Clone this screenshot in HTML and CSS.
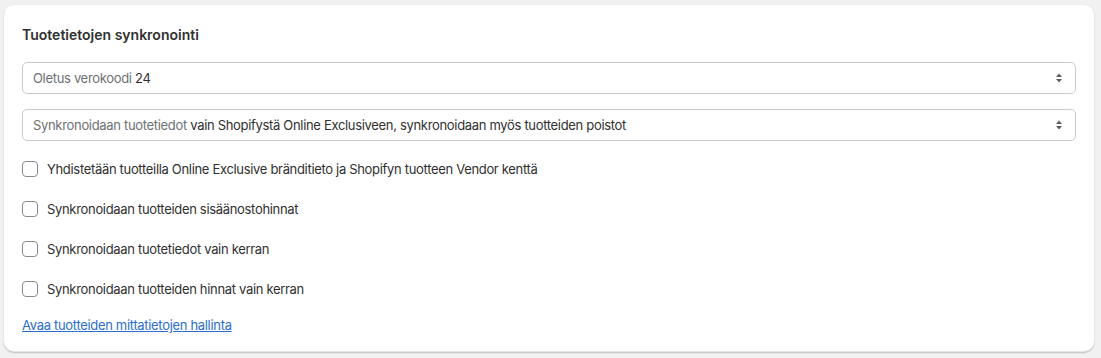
FILE: index.html
```html
<!DOCTYPE html>
<html lang="fi">
<head>
<meta charset="utf-8">
<title>Tuotetietojen synkronointi</title>
<link rel="stylesheet" href="styles.css">
</head>
<body>
<section class="card">
  <h2 class="card-title">Tuotetietojen synkronointi</h2>
  <div class="select select-first">
    <span class="select-text"><span class="select-label">Oletus verokoodi</span> 24</span>
    <svg class="select-arrows" width="10" height="12" viewBox="0 0 10 12"><path d="M5 1.5 L8 5 H2 Z M5 10.5 L8 7 H2 Z" fill="#5c5f62"/></svg>
  </div>
  <div class="select select-second">
    <span class="select-text"><span class="select-label">Synkronoidaan tuotetiedot</span> vain Shopifystä Online Exclusiveen, synkronoidaan myös tuotteiden poistot</span>
    <svg class="select-arrows" width="10" height="12" viewBox="0 0 10 12"><path d="M5 1.5 L8 5 H2 Z M5 10.5 L8 7 H2 Z" fill="#5c5f62"/></svg>
  </div>
  <div class="checks">
    <label class="check"><span class="box"></span><span>Yhdistetään tuotteilla Online Exclusive bränditieto ja Shopifyn tuotteen Vendor kenttä</span></label>
    <label class="check"><span class="box"></span><span>Synkronoidaan tuotteiden sisäänostohinnat</span></label>
    <label class="check"><span class="box"></span><span>Synkronoidaan tuotetiedot vain kerran</span></label>
    <label class="check"><span class="box"></span><span>Synkronoidaan tuotteiden hinnat vain kerran</span></label>
  </div>
  <a class="link" href="#">Avaa tuotteiden mittatietojen hallinta</a>
</section>
</body>
</html>
```
FILE: styles.css
```css
* { box-sizing: border-box; }
html, body { margin: 0; }
body {
  background: #f1f1f1;
  padding: 5px 7px 6px 4px;
  font-family: Inter, "Noto Sans", sans-serif;
  color: #303030;
  font-size: 13px;
  letter-spacing: -0.32px;
}
.card {
  width: 1090px;
  height: 347px;
  background: #ffffff;
  border-radius: 10px;
  box-shadow: 0 1px 0 0 rgba(26,26,26,0.07), 0 1px 2px rgba(0,0,0,0.15), inset 0 -1px 0 rgba(0,0,0,0.1);
  padding: 20px 18px 17px 18px;
  display: flex;
  flex-direction: column;
}
.card-title {
  margin: 0;
  font-size: 14px;
  line-height: 20px;
  font-weight: 600;
  color: #303030;
  letter-spacing: 0;
}
.select {
  height: 32px;
  border: 1px solid #c9cccf;
  border-radius: 5px;
  display: flex;
  align-items: center;
  justify-content: space-between;
  padding: 0 11px 0 10px;
  line-height: 20px;
}
.select-first { margin-top: 17px; }
.select-second { margin-top: 15px; }
.select-label { color: #6d7175; }
.select-text { color: #303030; }
.select-arrows { display: block; }
.checks {
  margin-top: 18px;
  display: flex;
  flex-direction: column;
  gap: 20px;
}
.check {
  display: flex;
  align-items: center;
  gap: 9px;
  line-height: 20px;
  height: 20px;
}
.box {
  width: 16px;
  height: 16px;
  border: 1px solid #8a8a8a;
  border-radius: 4px;
  background: #fff;
  flex: none;
}
.link {
  margin-top: 16px;
  color: #2c6ecb;
  text-decoration: underline;
  line-height: 20px;
  align-self: flex-start;
}
```
